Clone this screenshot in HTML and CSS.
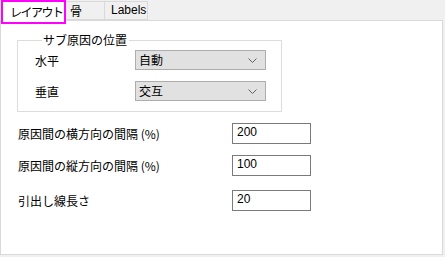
FILE: index.html
```html
<!DOCTYPE html>
<html lang="ja">
<head>
  <meta charset="UTF-8" />
  <title>レイアウト</title>
  <link rel="stylesheet" href="styles.css">
</head>
<body>
  <div class="tabs">
    <div class="tab active">レイアウト</div>
    <div class="tab">骨</div>
    <div class="tab">Labels</div>
  </div>

  <div class="panel">
    <fieldset class="group">
      <legend>サブ原因の位置</legend>
      <div class="group-row">
        <span class="group-label">水平</span>
        <div class="select">
          <span>自動</span>
          <svg width="9" height="5" viewBox="0 0 9 5"><path d="M0.5 0.5 L4.5 4.5 L8.5 0.5" fill="none" stroke="#606060" stroke-width="1"/></svg>
        </div>
      </div>
      <div class="group-row">
        <span class="group-label">垂直</span>
        <div class="select">
          <span>交互</span>
          <svg width="9" height="5" viewBox="0 0 9 5"><path d="M0.5 0.5 L4.5 4.5 L8.5 0.5" fill="none" stroke="#606060" stroke-width="1"/></svg>
        </div>
      </div>
    </fieldset>

    <div class="form-row">
      <label>原因間の横方向の間隔 (%)</label>
      <div class="field">200</div>
    </div>
    <div class="form-row">
      <label>原因間の縦方向の間隔 (%)</label>
      <div class="field">100</div>
    </div>
    <div class="form-row last">
      <label>引出し線長さ</label>
      <div class="field">20</div>
    </div>
  </div>
</body>
</html>
```

FILE: styles.css
```css
* {
  margin: 0;
  padding: 0;
  box-sizing: border-box;
}

body {
  background: #f0f0f0;
  font-family: "Noto Sans CJK JP", "Liberation Sans", sans-serif;
  font-size: 12px;
  color: #000;
  width: 445px;
  height: 257px;
  overflow: hidden;
}

.tabs {
  display: flex;
  align-items: flex-end;
  height: 20px;
  padding-left: 1px;
}

.tab {
  height: 19px;
  line-height: 17px;
  padding: 0 6px;
  border: 1px solid #d9d9d9;
  border-left: none;
  background: #f0f0f0;
  white-space: nowrap;
}

.tab:nth-child(2) {
  width: 39px;
  padding-left: 4px;
}

.tab:nth-child(3) {
  width: 43px;
  padding-left: 6px;
  font-family: "Liberation Sans", sans-serif;
}

.tab.active {
  position: relative;
  z-index: 2;
  width: 65px;
  height: 24px;
  margin-bottom: -4px;
  align-self: flex-start;
  background: #fff;
  border: 2px solid #ff00ff;
  padding: 0 0 0 7px;
  line-height: 19px;
  letter-spacing: -1.5px;
}

.panel {
  width: 443px;
  height: 235px;
  background: #fff;
  border: 1px solid #d9d9d9;
  padding: 0 0 0 16px;
}

.group {
  width: 265px;
  height: 79px;
  margin-top: 12px;
  border: 1px solid #dcdcdc;
  padding: 0 0 0 17px;
}

.group legend {
  margin-left: 7px;
  padding: 0 2px 0 1px;
  line-height: 14px;
}

.group-row {
  display: flex;
  align-items: center;
  height: 20px;
  margin-bottom: 11px;
}

.group-row:first-of-type {
  margin-top: 3px;
}

.group-label {
  width: 100px;
}

.select {
  width: 131px;
  height: 20px;
  background: #e1e1e1;
  border: 1px solid #adadad;
  display: flex;
  align-items: center;
  justify-content: space-between;
  padding: 0 8px 0 3px;
  line-height: 16px;
}

.form-row {
  display: flex;
  align-items: center;
  height: 21px;
  margin-top: 11px;
}

.form-row.last {
  margin-top: 14px;
}

.form-row label {
  width: 215px;
  padding-left: 1px;
}

.field {
  width: 79px;
  height: 21px;
  border: 1px solid #7a7a7a;
  padding: 1px 4px;
  font-family: "Liberation Sans", sans-serif;
  line-height: 15px;
}
```
